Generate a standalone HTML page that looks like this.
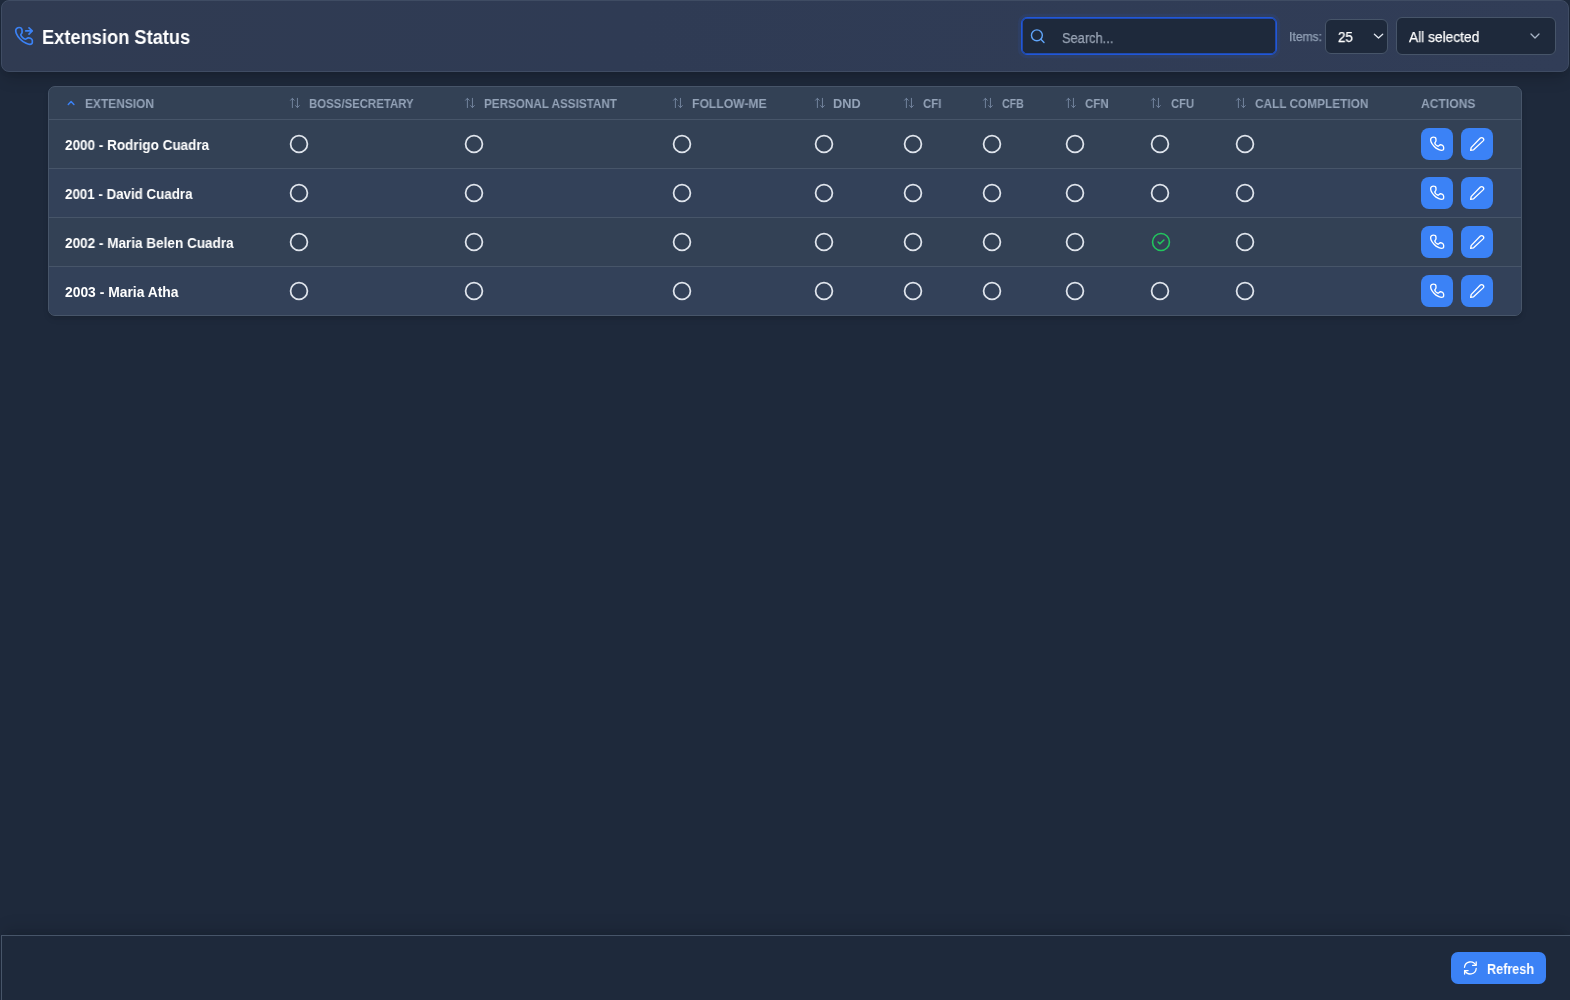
<!DOCTYPE html>
<html lang="en">
<head>
<meta charset="utf-8">
<title>Extension Status</title>
<style>
*{box-sizing:border-box;margin:0;padding:0}
html,body{width:1570px;height:1000px;overflow:hidden;background:#1e293b;font-family:"Liberation Sans",sans-serif;color:#fff}
body{position:relative}
.abs{position:absolute}
.t{position:absolute;display:inline-block;white-space:nowrap;transform-origin:0 50%;will-change:transform}
/* header */
#hdr{left:1px;top:0;width:1568px;height:72px;border:1px solid #3f4c63;border-radius:8px;background:linear-gradient(100deg,#303b52 0%,#2f3b54 40%,#313d57 100%);box-shadow:0 10px 15px -3px rgba(0,0,0,.15),0 4px 6px -4px rgba(0,0,0,.14)}
#search{left:1021.4px;top:17px;width:256px;height:38px;border:1px solid #2157d9;border-radius:6px;background:#1e293b;box-shadow:inset 0 0 0 .7px #2157d9,0 0 0 3.2px rgba(45,100,230,.09)}
#sel1{left:1325px;top:19px;width:63px;height:35px;border:1px solid #475569;border-radius:6px;background:#1e293b}
#sel2{left:1396px;top:17px;width:160px;height:38px;border:1px solid #475569;border-radius:6px;background:#1e293b}
/* table */
#tbl{left:48px;top:86px;width:1474px;height:230px;border:1px solid #475569;border-radius:7px;background:#334155;overflow:hidden;box-shadow:0 4px 6px -1px rgba(0,0,0,.1),0 2px 4px -2px rgba(0,0,0,.1)}
.hl{position:absolute;left:0;width:1472px;height:1px;background:#475569}
.sort{position:absolute;top:11px;width:12px;height:12px}
.btn{position:absolute;width:32px;height:32px;border-radius:8px;background:#3b82f6}
.btn svg{position:absolute;left:8px;top:8px;width:16px;height:16px}
/* footer */
#ft{left:1px;top:935px;width:1570px;height:66px;border-top:1px solid #475569;border-left:1px solid #475569;box-shadow:0 -10px 15px -3px rgba(0,0,0,.1),0 -4px 6px -4px rgba(0,0,0,.1)}
#refresh{left:1450.7px;top:952px;width:95.2px;height:32px;border-radius:7px;background:#3b82f6}
</style>
</head>
<body>
<div id="hdr" class="abs"></div>
<svg class="abs" style="left:14px;top:26px;width:20px;height:20px" viewBox="0 0 20 20" fill="none" stroke="#3b82f6" stroke-width="1.7" stroke-linecap="round" stroke-linejoin="round">
<g transform="translate(0.3 0.55) scale(1.2)" stroke-width="1.42"><path d="M1.2 3.3 C1.2 1.9 2.6 0.8 4.05 0.8 C5.3 0.8 6.2 1.4 6.35 2.6 C6.5 3.6 6.6 4.4 6.45 5.0 C6.3 5.8 5.4 6.2 5.4 6.9 C5.7 8.2 7.9 10.4 9.3 10.6 C10.0 10.6 10.6 9.5 11.6 9.4 C12.6 9.3 14.0 9.9 14.6 10.6 C15.1 11.1 15.1 12.6 15.0 13.5 C14.9 14.3 14.0 14.8 13.0 14.8 C12.0 14.8 10.9 14.5 9.9 14.0 C8.0 13.1 6.0 11.8 4.8 10.4 C3.4 8.9 2.3 7.3 1.7 5.8 C1.4 5.0 1.2 4.1 1.2 3.3 Z"/></g>
<path d="M11.8 4.9 H18.2 M15 1.9 L18.2 4.9 L15 8.1"/>
</svg>

<div id="search" class="abs">
<svg style="position:absolute;left:6.6px;top:10px;width:18px;height:18px" viewBox="0 0 18 18" fill="none" stroke="#60a5fa" stroke-width="1.4" stroke-linecap="round"><circle cx="7.9" cy="7.3" r="5.45"/><path d="M11.9 11.3 L15 14.6"/></svg>
</div>
<div id="sel1" class="abs">
<svg style="position:absolute;left:46px;top:12px;width:12px;height:10px" viewBox="0 0 12 10" fill="none" stroke="#e2e8f0" stroke-width="1.3" stroke-linecap="round" stroke-linejoin="round"><path d="M2.4 2.3 L6.5 6 L10.7 2.3"/></svg>
</div>
<div id="sel2" class="abs">
<svg style="position:absolute;left:132px;top:13px;width:12px;height:10px" viewBox="0 0 12 10" fill="none" stroke="#a9b5c7" stroke-width="1.3" stroke-linecap="round" stroke-linejoin="round"><path d="M2 3 L6 7 L10 3"/></svg>
</div>

<div id="tbl" class="abs">
<div style="position:absolute;left:0;top:82px;width:1472px;height:48px;background:#334159"></div>
<div style="position:absolute;left:0;top:180px;width:1472px;height:48px;background:#334159"></div>
<div class="hl" style="top:32px"></div>
<div class="hl" style="top:81px"></div>
<div class="hl" style="top:130px"></div>
<div class="hl" style="top:179px"></div>
</div>

<div id="ft" class="abs"></div>
<div id="refresh" class="abs">
<svg style="position:absolute;left:11.7px;top:8px;width:16px;height:16px" viewBox="0 0 16 16" fill="none" stroke="#fff" stroke-width="1.3" stroke-linecap="round" stroke-linejoin="round"><path d="M2.5 7.3 A5.95 5.95 0 0 1 13.8 5.3 M14.2 8.5 A5.95 5.95 0 0 1 2.9 10.6"/><path d="M14.2 1.9 V5.3 H10.6"/><path d="M2.6 14.1 V10.6 H6.1"/></svg>
</div>
<!--T0-->
<svg class="abs" style="left:65px;top:98px;width:12px;height:10px" viewBox="0 0 12 10" fill="none" stroke="#3b82f6" stroke-width="1.5" stroke-linecap="round" stroke-linejoin="round"><path d="M3.3 6.5 L6.1 3.6 L8.9 6.5"/></svg>
<svg class="sort abs" style="left:289.00px;top:97.2px" viewBox="0 0 12 12" fill="none" stroke="#71829c" stroke-width="1" stroke-linecap="round" stroke-linejoin="round"><path d="M3.4 10.6 V1.3 M1.5 3.3 L3.4 1.3 L5.3 3.3 M8.45 1.3 V10.6 M6.55 8.6 L8.45 10.6 L10.35 8.6"/></svg>
<svg class="sort abs" style="left:464.00px;top:97.2px" viewBox="0 0 12 12" fill="none" stroke="#71829c" stroke-width="1" stroke-linecap="round" stroke-linejoin="round"><path d="M3.4 10.6 V1.3 M1.5 3.3 L3.4 1.3 L5.3 3.3 M8.45 1.3 V10.6 M6.55 8.6 L8.45 10.6 L10.35 8.6"/></svg>
<svg class="sort abs" style="left:672.00px;top:97.2px" viewBox="0 0 12 12" fill="none" stroke="#71829c" stroke-width="1" stroke-linecap="round" stroke-linejoin="round"><path d="M3.4 10.6 V1.3 M1.5 3.3 L3.4 1.3 L5.3 3.3 M8.45 1.3 V10.6 M6.55 8.6 L8.45 10.6 L10.35 8.6"/></svg>
<svg class="sort abs" style="left:813.60px;top:97.2px" viewBox="0 0 12 12" fill="none" stroke="#71829c" stroke-width="1" stroke-linecap="round" stroke-linejoin="round"><path d="M3.4 10.6 V1.3 M1.5 3.3 L3.4 1.3 L5.3 3.3 M8.45 1.3 V10.6 M6.55 8.6 L8.45 10.6 L10.35 8.6"/></svg>
<svg class="sort abs" style="left:903.00px;top:97.2px" viewBox="0 0 12 12" fill="none" stroke="#71829c" stroke-width="1" stroke-linecap="round" stroke-linejoin="round"><path d="M3.4 10.6 V1.3 M1.5 3.3 L3.4 1.3 L5.3 3.3 M8.45 1.3 V10.6 M6.55 8.6 L8.45 10.6 L10.35 8.6"/></svg>
<svg class="sort abs" style="left:982.00px;top:97.2px" viewBox="0 0 12 12" fill="none" stroke="#71829c" stroke-width="1" stroke-linecap="round" stroke-linejoin="round"><path d="M3.4 10.6 V1.3 M1.5 3.3 L3.4 1.3 L5.3 3.3 M8.45 1.3 V10.6 M6.55 8.6 L8.45 10.6 L10.35 8.6"/></svg>
<svg class="sort abs" style="left:1065.00px;top:97.2px" viewBox="0 0 12 12" fill="none" stroke="#71829c" stroke-width="1" stroke-linecap="round" stroke-linejoin="round"><path d="M3.4 10.6 V1.3 M1.5 3.3 L3.4 1.3 L5.3 3.3 M8.45 1.3 V10.6 M6.55 8.6 L8.45 10.6 L10.35 8.6"/></svg>
<svg class="sort abs" style="left:1150.45px;top:97.2px" viewBox="0 0 12 12" fill="none" stroke="#71829c" stroke-width="1" stroke-linecap="round" stroke-linejoin="round"><path d="M3.4 10.6 V1.3 M1.5 3.3 L3.4 1.3 L5.3 3.3 M8.45 1.3 V10.6 M6.55 8.6 L8.45 10.6 L10.35 8.6"/></svg>
<svg class="sort abs" style="left:1235.00px;top:97.2px" viewBox="0 0 12 12" fill="none" stroke="#71829c" stroke-width="1" stroke-linecap="round" stroke-linejoin="round"><path d="M3.4 10.6 V1.3 M1.5 3.3 L3.4 1.3 L5.3 3.3 M8.45 1.3 V10.6 M6.55 8.6 L8.45 10.6 L10.35 8.6"/></svg>
<svg class="abs" style="left:289.00px;top:134.05px;width:20px;height:20px" viewBox="0 0 20 20" fill="none" stroke="#dfe4ec"><circle cx="10" cy="10" r="8.4" stroke-width="1.75"/></svg>
<svg class="abs" style="left:464.00px;top:134.05px;width:20px;height:20px" viewBox="0 0 20 20" fill="none" stroke="#dfe4ec"><circle cx="10" cy="10" r="8.4" stroke-width="1.75"/></svg>
<svg class="abs" style="left:672.00px;top:134.05px;width:20px;height:20px" viewBox="0 0 20 20" fill="none" stroke="#dfe4ec"><circle cx="10" cy="10" r="8.4" stroke-width="1.75"/></svg>
<svg class="abs" style="left:813.60px;top:134.05px;width:20px;height:20px" viewBox="0 0 20 20" fill="none" stroke="#dfe4ec"><circle cx="10" cy="10" r="8.4" stroke-width="1.75"/></svg>
<svg class="abs" style="left:903.00px;top:134.05px;width:20px;height:20px" viewBox="0 0 20 20" fill="none" stroke="#dfe4ec"><circle cx="10" cy="10" r="8.4" stroke-width="1.75"/></svg>
<svg class="abs" style="left:982.00px;top:134.05px;width:20px;height:20px" viewBox="0 0 20 20" fill="none" stroke="#dfe4ec"><circle cx="10" cy="10" r="8.4" stroke-width="1.75"/></svg>
<svg class="abs" style="left:1065.00px;top:134.05px;width:20px;height:20px" viewBox="0 0 20 20" fill="none" stroke="#dfe4ec"><circle cx="10" cy="10" r="8.4" stroke-width="1.75"/></svg>
<svg class="abs" style="left:1150.45px;top:134.05px;width:20px;height:20px" viewBox="0 0 20 20" fill="none" stroke="#dfe4ec"><circle cx="10" cy="10" r="8.4" stroke-width="1.75"/></svg>
<svg class="abs" style="left:1235.00px;top:134.05px;width:20px;height:20px" viewBox="0 0 20 20" fill="none" stroke="#dfe4ec"><circle cx="10" cy="10" r="8.4" stroke-width="1.75"/></svg>
<div class="btn abs" style="left:1421px;top:128px"><svg viewBox="-0.55 -0.45 17 17" fill="none" stroke="#fff" stroke-width="1.45" stroke-linecap="round" stroke-linejoin="round"><path d="M1.2 3.3 C1.2 1.9 2.6 0.8 4.05 0.8 C5.5 0.8 6.7 1.4 6.8 2.6 C6.9 3.6 7.0 4.4 6.8 5.0 C6.6 5.8 5.6 6.4 5.6 7.1 C5.9 8.4 7.9 10.2 9.3 10.4 C10.0 10.4 10.6 9.0 11.6 8.9 C12.6 8.8 14.0 9.6 14.6 10.4 C15.1 11.1 15.1 12.6 15.0 13.5 C14.9 14.3 14.0 14.8 13.0 14.8 C12.0 14.8 10.9 14.5 9.9 14.0 C8.0 13.1 6.0 11.8 4.8 10.4 C3.4 8.9 2.3 7.3 1.7 5.8 C1.4 5.0 1.2 4.1 1.2 3.3 Z"/></svg></div>
<div class="btn abs" style="left:1461px;top:128px"><svg viewBox="-0.1 -0.3 16.4 16.4" fill="none" stroke="#fff" stroke-width="1.38" stroke-linecap="round" stroke-linejoin="round"><path d="M1.6 14.4 L2.1 11.6 L11.3 2.0 C12.2 1.1 13.6 1.1 14.4 2.0 C15.2 2.9 15.1 4.0 14.4 4.7 L4.6 13.9 Z"/></svg></div>
<svg class="abs" style="left:289.00px;top:183.05px;width:20px;height:20px" viewBox="0 0 20 20" fill="none" stroke="#dfe4ec"><circle cx="10" cy="10" r="8.4" stroke-width="1.75"/></svg>
<svg class="abs" style="left:464.00px;top:183.05px;width:20px;height:20px" viewBox="0 0 20 20" fill="none" stroke="#dfe4ec"><circle cx="10" cy="10" r="8.4" stroke-width="1.75"/></svg>
<svg class="abs" style="left:672.00px;top:183.05px;width:20px;height:20px" viewBox="0 0 20 20" fill="none" stroke="#dfe4ec"><circle cx="10" cy="10" r="8.4" stroke-width="1.75"/></svg>
<svg class="abs" style="left:813.60px;top:183.05px;width:20px;height:20px" viewBox="0 0 20 20" fill="none" stroke="#dfe4ec"><circle cx="10" cy="10" r="8.4" stroke-width="1.75"/></svg>
<svg class="abs" style="left:903.00px;top:183.05px;width:20px;height:20px" viewBox="0 0 20 20" fill="none" stroke="#dfe4ec"><circle cx="10" cy="10" r="8.4" stroke-width="1.75"/></svg>
<svg class="abs" style="left:982.00px;top:183.05px;width:20px;height:20px" viewBox="0 0 20 20" fill="none" stroke="#dfe4ec"><circle cx="10" cy="10" r="8.4" stroke-width="1.75"/></svg>
<svg class="abs" style="left:1065.00px;top:183.05px;width:20px;height:20px" viewBox="0 0 20 20" fill="none" stroke="#dfe4ec"><circle cx="10" cy="10" r="8.4" stroke-width="1.75"/></svg>
<svg class="abs" style="left:1150.45px;top:183.05px;width:20px;height:20px" viewBox="0 0 20 20" fill="none" stroke="#dfe4ec"><circle cx="10" cy="10" r="8.4" stroke-width="1.75"/></svg>
<svg class="abs" style="left:1235.00px;top:183.05px;width:20px;height:20px" viewBox="0 0 20 20" fill="none" stroke="#dfe4ec"><circle cx="10" cy="10" r="8.4" stroke-width="1.75"/></svg>
<div class="btn abs" style="left:1421px;top:177px"><svg viewBox="-0.55 -0.45 17 17" fill="none" stroke="#fff" stroke-width="1.45" stroke-linecap="round" stroke-linejoin="round"><path d="M1.2 3.3 C1.2 1.9 2.6 0.8 4.05 0.8 C5.5 0.8 6.7 1.4 6.8 2.6 C6.9 3.6 7.0 4.4 6.8 5.0 C6.6 5.8 5.6 6.4 5.6 7.1 C5.9 8.4 7.9 10.2 9.3 10.4 C10.0 10.4 10.6 9.0 11.6 8.9 C12.6 8.8 14.0 9.6 14.6 10.4 C15.1 11.1 15.1 12.6 15.0 13.5 C14.9 14.3 14.0 14.8 13.0 14.8 C12.0 14.8 10.9 14.5 9.9 14.0 C8.0 13.1 6.0 11.8 4.8 10.4 C3.4 8.9 2.3 7.3 1.7 5.8 C1.4 5.0 1.2 4.1 1.2 3.3 Z"/></svg></div>
<div class="btn abs" style="left:1461px;top:177px"><svg viewBox="-0.1 -0.3 16.4 16.4" fill="none" stroke="#fff" stroke-width="1.38" stroke-linecap="round" stroke-linejoin="round"><path d="M1.6 14.4 L2.1 11.6 L11.3 2.0 C12.2 1.1 13.6 1.1 14.4 2.0 C15.2 2.9 15.1 4.0 14.4 4.7 L4.6 13.9 Z"/></svg></div>
<svg class="abs" style="left:289.00px;top:232.05px;width:20px;height:20px" viewBox="0 0 20 20" fill="none" stroke="#dfe4ec"><circle cx="10" cy="10" r="8.4" stroke-width="1.75"/></svg>
<svg class="abs" style="left:464.00px;top:232.05px;width:20px;height:20px" viewBox="0 0 20 20" fill="none" stroke="#dfe4ec"><circle cx="10" cy="10" r="8.4" stroke-width="1.75"/></svg>
<svg class="abs" style="left:672.00px;top:232.05px;width:20px;height:20px" viewBox="0 0 20 20" fill="none" stroke="#dfe4ec"><circle cx="10" cy="10" r="8.4" stroke-width="1.75"/></svg>
<svg class="abs" style="left:813.60px;top:232.05px;width:20px;height:20px" viewBox="0 0 20 20" fill="none" stroke="#dfe4ec"><circle cx="10" cy="10" r="8.4" stroke-width="1.75"/></svg>
<svg class="abs" style="left:903.00px;top:232.05px;width:20px;height:20px" viewBox="0 0 20 20" fill="none" stroke="#dfe4ec"><circle cx="10" cy="10" r="8.4" stroke-width="1.75"/></svg>
<svg class="abs" style="left:982.00px;top:232.05px;width:20px;height:20px" viewBox="0 0 20 20" fill="none" stroke="#dfe4ec"><circle cx="10" cy="10" r="8.4" stroke-width="1.75"/></svg>
<svg class="abs" style="left:1065.00px;top:232.05px;width:20px;height:20px" viewBox="0 0 20 20" fill="none" stroke="#dfe4ec"><circle cx="10" cy="10" r="8.4" stroke-width="1.75"/></svg>
<svg class="abs" style="left:1150.57px;top:232.10px;width:20px;height:20px" viewBox="0 0 20 20" fill="none" stroke="#22c55e" stroke-linecap="round" stroke-linejoin="round"><circle cx="10" cy="10" r="8.45" stroke-width="1.6"/><path d="M7.1 10 L9 11.8 L12.9 8" stroke-width="1.6"/></svg>
<svg class="abs" style="left:1235.00px;top:232.05px;width:20px;height:20px" viewBox="0 0 20 20" fill="none" stroke="#dfe4ec"><circle cx="10" cy="10" r="8.4" stroke-width="1.75"/></svg>
<div class="btn abs" style="left:1421px;top:226px"><svg viewBox="-0.55 -0.45 17 17" fill="none" stroke="#fff" stroke-width="1.45" stroke-linecap="round" stroke-linejoin="round"><path d="M1.2 3.3 C1.2 1.9 2.6 0.8 4.05 0.8 C5.5 0.8 6.7 1.4 6.8 2.6 C6.9 3.6 7.0 4.4 6.8 5.0 C6.6 5.8 5.6 6.4 5.6 7.1 C5.9 8.4 7.9 10.2 9.3 10.4 C10.0 10.4 10.6 9.0 11.6 8.9 C12.6 8.8 14.0 9.6 14.6 10.4 C15.1 11.1 15.1 12.6 15.0 13.5 C14.9 14.3 14.0 14.8 13.0 14.8 C12.0 14.8 10.9 14.5 9.9 14.0 C8.0 13.1 6.0 11.8 4.8 10.4 C3.4 8.9 2.3 7.3 1.7 5.8 C1.4 5.0 1.2 4.1 1.2 3.3 Z"/></svg></div>
<div class="btn abs" style="left:1461px;top:226px"><svg viewBox="-0.1 -0.3 16.4 16.4" fill="none" stroke="#fff" stroke-width="1.38" stroke-linecap="round" stroke-linejoin="round"><path d="M1.6 14.4 L2.1 11.6 L11.3 2.0 C12.2 1.1 13.6 1.1 14.4 2.0 C15.2 2.9 15.1 4.0 14.4 4.7 L4.6 13.9 Z"/></svg></div>
<svg class="abs" style="left:289.00px;top:281.05px;width:20px;height:20px" viewBox="0 0 20 20" fill="none" stroke="#dfe4ec"><circle cx="10" cy="10" r="8.4" stroke-width="1.75"/></svg>
<svg class="abs" style="left:464.00px;top:281.05px;width:20px;height:20px" viewBox="0 0 20 20" fill="none" stroke="#dfe4ec"><circle cx="10" cy="10" r="8.4" stroke-width="1.75"/></svg>
<svg class="abs" style="left:672.00px;top:281.05px;width:20px;height:20px" viewBox="0 0 20 20" fill="none" stroke="#dfe4ec"><circle cx="10" cy="10" r="8.4" stroke-width="1.75"/></svg>
<svg class="abs" style="left:813.60px;top:281.05px;width:20px;height:20px" viewBox="0 0 20 20" fill="none" stroke="#dfe4ec"><circle cx="10" cy="10" r="8.4" stroke-width="1.75"/></svg>
<svg class="abs" style="left:903.00px;top:281.05px;width:20px;height:20px" viewBox="0 0 20 20" fill="none" stroke="#dfe4ec"><circle cx="10" cy="10" r="8.4" stroke-width="1.75"/></svg>
<svg class="abs" style="left:982.00px;top:281.05px;width:20px;height:20px" viewBox="0 0 20 20" fill="none" stroke="#dfe4ec"><circle cx="10" cy="10" r="8.4" stroke-width="1.75"/></svg>
<svg class="abs" style="left:1065.00px;top:281.05px;width:20px;height:20px" viewBox="0 0 20 20" fill="none" stroke="#dfe4ec"><circle cx="10" cy="10" r="8.4" stroke-width="1.75"/></svg>
<svg class="abs" style="left:1150.45px;top:281.05px;width:20px;height:20px" viewBox="0 0 20 20" fill="none" stroke="#dfe4ec"><circle cx="10" cy="10" r="8.4" stroke-width="1.75"/></svg>
<svg class="abs" style="left:1235.00px;top:281.05px;width:20px;height:20px" viewBox="0 0 20 20" fill="none" stroke="#dfe4ec"><circle cx="10" cy="10" r="8.4" stroke-width="1.75"/></svg>
<div class="btn abs" style="left:1421px;top:275px"><svg viewBox="-0.55 -0.45 17 17" fill="none" stroke="#fff" stroke-width="1.45" stroke-linecap="round" stroke-linejoin="round"><path d="M1.2 3.3 C1.2 1.9 2.6 0.8 4.05 0.8 C5.5 0.8 6.7 1.4 6.8 2.6 C6.9 3.6 7.0 4.4 6.8 5.0 C6.6 5.8 5.6 6.4 5.6 7.1 C5.9 8.4 7.9 10.2 9.3 10.4 C10.0 10.4 10.6 9.0 11.6 8.9 C12.6 8.8 14.0 9.6 14.6 10.4 C15.1 11.1 15.1 12.6 15.0 13.5 C14.9 14.3 14.0 14.8 13.0 14.8 C12.0 14.8 10.9 14.5 9.9 14.0 C8.0 13.1 6.0 11.8 4.8 10.4 C3.4 8.9 2.3 7.3 1.7 5.8 C1.4 5.0 1.2 4.1 1.2 3.3 Z"/></svg></div>
<div class="btn abs" style="left:1461px;top:275px"><svg viewBox="-0.1 -0.3 16.4 16.4" fill="none" stroke="#fff" stroke-width="1.38" stroke-linecap="round" stroke-linejoin="round"><path d="M1.6 14.4 L2.1 11.6 L11.3 2.0 C12.2 1.1 13.6 1.1 14.4 2.0 C15.2 2.9 15.1 4.0 14.4 4.7 L4.6 13.9 Z"/></svg></div>
<span class="t" style="left:41.77px;top:24.71px;font-size:19.6px;line-height:25px;font-weight:bold;color:#ffffff;transform:scaleX(0.9325)">Extension Status</span>
<span class="t" style="left:1061.80px;top:28.55px;font-size:14px;line-height:18px;font-weight:normal;color:#9aa5b6;-webkit-text-stroke:.25px #9aa5b6;transform:scaleX(0.9177)">Search...</span>
<span class="t" style="left:1289.02px;top:28.60px;font-size:12.4px;line-height:16px;font-weight:normal;color:#94a3b8;-webkit-text-stroke:.25px #94a3b8;transform:scaleX(0.9785)">Items:</span>
<span class="t" style="left:1338.20px;top:27.88px;font-size:14.5px;line-height:19px;font-weight:normal;color:#ffffff;-webkit-text-stroke:.25px #ffffff;transform:scaleX(0.9213)">25</span>
<span class="t" style="left:1409.30px;top:28.48px;font-size:14.2px;line-height:18px;font-weight:normal;color:#ffffff;-webkit-text-stroke:.25px #ffffff;transform:scaleX(0.9684)">All selected</span>
<span class="t" style="left:1486.90px;top:961.32px;font-size:13.8px;line-height:18px;font-weight:bold;color:#ffffff;transform:scaleX(0.9147)">Refresh</span>
<span class="t" style="left:84.90px;top:95.77px;font-size:12.5px;line-height:16px;font-weight:bold;color:#94a3b8;transform:scaleX(0.9542)">EXTENSION</span>
<span class="t" style="left:308.90px;top:95.77px;font-size:12.5px;line-height:16px;font-weight:bold;color:#94a3b8;transform:scaleX(0.9127)">BOSS/SECRETARY</span>
<span class="t" style="left:483.80px;top:95.77px;font-size:12.5px;line-height:16px;font-weight:bold;color:#94a3b8;transform:scaleX(0.9351)">PERSONAL ASSISTANT</span>
<span class="t" style="left:692.00px;top:95.77px;font-size:12.5px;line-height:16px;font-weight:bold;color:#94a3b8;transform:scaleX(0.9716)">FOLLOW-ME</span>
<span class="t" style="left:833.20px;top:95.77px;font-size:12.5px;line-height:16px;font-weight:bold;color:#94a3b8;transform:scaleX(1.0202)">DND</span>
<span class="t" style="left:922.80px;top:95.77px;font-size:12.5px;line-height:16px;font-weight:bold;color:#94a3b8;transform:scaleX(0.9104)">CFI</span>
<span class="t" style="left:1001.90px;top:95.77px;font-size:12.5px;line-height:16px;font-weight:bold;color:#94a3b8;transform:scaleX(0.8456)">CFB</span>
<span class="t" style="left:1085.00px;top:95.77px;font-size:12.5px;line-height:16px;font-weight:bold;color:#94a3b8;transform:scaleX(0.9196)">CFN</span>
<span class="t" style="left:1170.50px;top:95.77px;font-size:12.5px;line-height:16px;font-weight:bold;color:#94a3b8;transform:scaleX(0.8962)">CFU</span>
<span class="t" style="left:1255.00px;top:95.77px;font-size:12.5px;line-height:16px;font-weight:bold;color:#94a3b8;transform:scaleX(0.9450)">CALL COMPLETION</span>
<span class="t" style="left:1420.90px;top:95.77px;font-size:12.5px;line-height:16px;font-weight:bold;color:#94a3b8;transform:scaleX(0.9658)">ACTIONS</span>
<span class="t" style="left:64.90px;top:136.62px;font-size:13.8px;line-height:18px;font-weight:bold;color:#ffffff;transform:scaleX(0.9788)">2000 - Rodrigo Cuadra</span>
<span class="t" style="left:64.90px;top:185.62px;font-size:13.8px;line-height:18px;font-weight:bold;color:#ffffff;transform:scaleX(0.9666)">2001 - David Cuadra</span>
<span class="t" style="left:64.90px;top:234.62px;font-size:13.8px;line-height:18px;font-weight:bold;color:#ffffff;transform:scaleX(0.9820)">2002 - Maria Belen Cuadra</span>
<span class="t" style="left:64.90px;top:283.62px;font-size:13.8px;line-height:18px;font-weight:bold;color:#ffffff;transform:scaleX(1.0043)">2003 - Maria Atha</span>
<!--T1-->
</body>
</html>
